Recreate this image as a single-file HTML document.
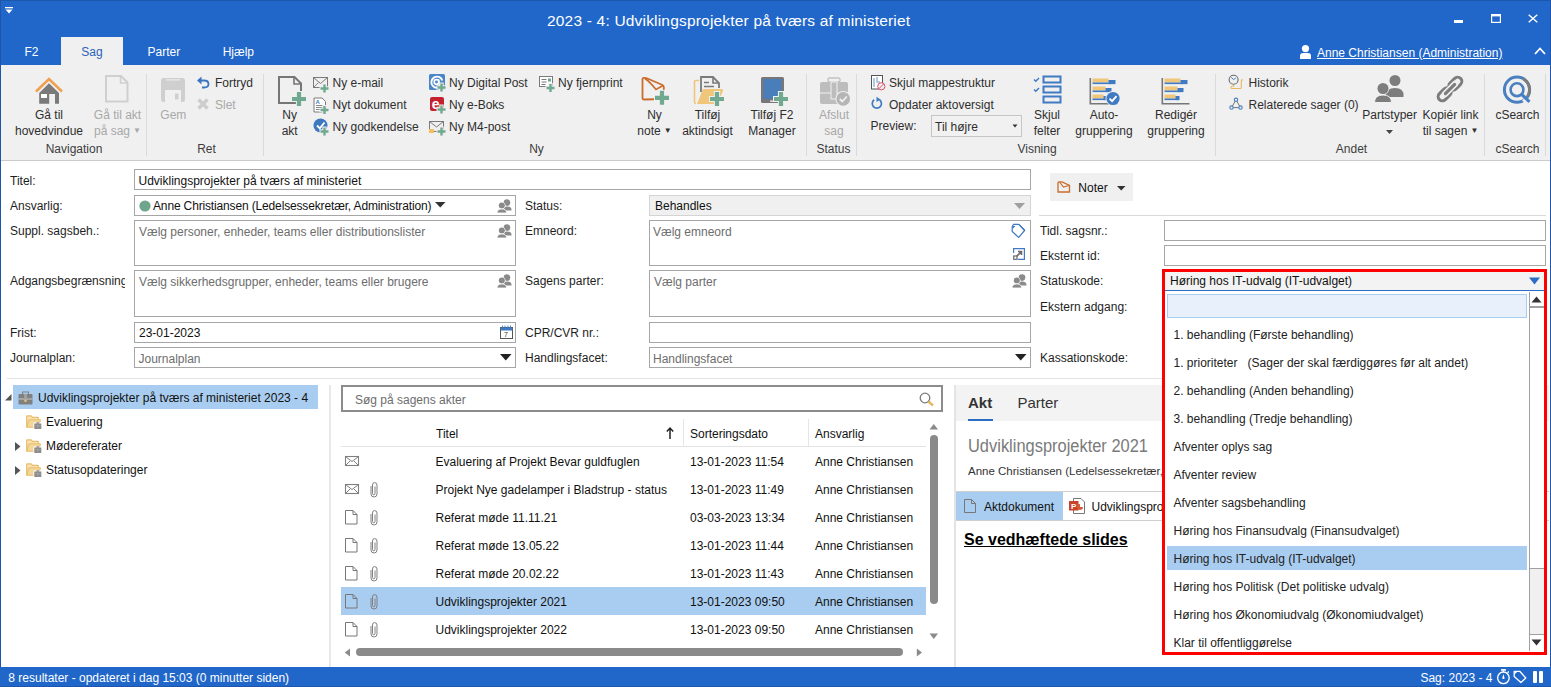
<!DOCTYPE html>
<html><head><meta charset="utf-8"><style>
html,body{margin:0;padding:0;width:1551px;height:687px;overflow:hidden;background:#fff}
body{position:relative;font-family:"Liberation Sans",sans-serif}
.t{position:absolute;white-space:nowrap;line-height:1;font-family:"Liberation Sans",sans-serif}
.r{position:absolute;box-sizing:border-box}
svg.r{overflow:visible}
</style></head><body>
<div class="r" style="left:0px;top:0px;width:1551px;height:37px;background:#2167c9"></div>
<div class="r" style="left:0px;top:0px;width:1551px;height:1px;background:#1b57ad"></div>
<div class="r" style="left:0px;top:37px;width:1551px;height:28px;background:#2167c9"></div>
<svg class="r" style="left:5px;top:7px" width="8" height="7" viewBox="0 0 8 7"><rect x="0" y="0" width="8" height="1.3" fill="#fff"/><path d="M0.5 2.5 L7.5 2.5 L4 6.5 Z" fill="#fff"/></svg>
<div class="t" style="left:547px;top:12.88px;font-size:15.5px;color:#fff;font-weight:400;letter-spacing:0.19px">2023 - 4: Udviklingsprojekter på tværs af ministeriet</div>
<div class="r" style="left:1454px;top:20px;width:9px;height:3px;background:#fff"></div>
<svg class="r" style="left:1491px;top:14px" width="10" height="9" viewBox="0 0 10 9"><rect x="0.6" y="0.6" width="8.8" height="7.8" fill="none" stroke="#fff" stroke-width="1.2"/><rect x="0" y="0" width="10" height="2.4" fill="#fff"/></svg>
<svg class="r" style="left:1528px;top:14px" width="10" height="9" viewBox="0 0 10 9"><path d="M0.7 0.7 L9.3 8.3 M9.3 0.7 L0.7 8.3" stroke="#fff" stroke-width="1.4"/></svg>
<div class="r" style="left:61px;top:37px;width:62px;height:28px;background:#f0f0f0"></div>
<div class="t" style="left:24.5px;top:45.84px;font-size:12px;color:#fff;font-weight:400;">F2</div>
<div class="t" style="left:-208px;width:600px;text-align:center;top:45.84px;font-size:12px;color:#2b63b8;font-weight:400;">Sag</div>
<div class="t" style="left:147.6px;top:45.84px;font-size:12px;color:#fff;font-weight:400;">Parter</div>
<div class="t" style="left:222.7px;top:45.84px;font-size:12px;color:#fff;font-weight:400;">Hjælp</div>
<svg class="r" style="left:1300px;top:45px" width="11" height="14" viewBox="0 0 11 14"><circle cx="5.5" cy="3.6" r="3.6" fill="#fff"/><path d="M0 14 L0 11 Q0 8 3 8 L8 8 Q11 8 11 11 L11 14 Z" fill="#fff"/></svg>
<div class="t" style="left:1317px;top:46.84px;font-size:12px;color:#fff;font-weight:400;text-decoration:underline">Anne Christiansen (Administration)</div>
<svg class="r" style="left:1534px;top:47px" width="12" height="8" viewBox="0 0 12 8"><path d="M1 7 L6 1.5 L11 7" fill="none" stroke="#fff" stroke-width="1.8"/></svg>
<div class="r" style="left:1px;top:65px;width:1549px;height:95px;background:#f0f0f0"></div>
<div class="r" style="left:1px;top:160px;width:1549px;height:1px;background:#cbcbcb"></div>
<div class="r" style="left:146px;top:74px;width:1px;height:82px;background:#dadada"></div>
<div class="r" style="left:263px;top:74px;width:1px;height:82px;background:#dadada"></div>
<div class="r" style="left:806px;top:74px;width:1px;height:82px;background:#dadada"></div>
<div class="r" style="left:856px;top:74px;width:1px;height:82px;background:#dadada"></div>
<div class="r" style="left:1215px;top:74px;width:1px;height:82px;background:#dadada"></div>
<div class="r" style="left:1484px;top:74px;width:1px;height:82px;background:#dadada"></div>
<div class="r" style="left:1545px;top:74px;width:1px;height:82px;background:#dadada"></div>
<svg class="r" style="left:0;top:0" width="1551" height="687"><path d="M39.2 93 L49 83.3 L59 93 L59 103.8 L55 103.8 L55 94 L49.2 94 L49.2 103.8 L39.2 103.8 Z" fill="#7a7a7a"/><rect x="41" y="94" width="6" height="4" fill="#fff"/><path d="M36 91.5 L49 79 L62 91.5" fill="none" stroke="#f0a04e" stroke-width="2.6" stroke-linejoin="miter"/><path d="M106 76 L121 76 L127.5 82.5 L127.5 101.5 L106 101.5 Z" fill="none" stroke="#cfcfcf" stroke-width="2"/><path d="M120.5 76 L120.5 83 L127.5 83" fill="none" stroke="#cfcfcf" stroke-width="1.5"/><rect x="161" y="78" width="24" height="24" rx="2.5" fill="#cfcfcf"/><rect x="166" y="79" width="14" height="1.6" fill="#e4e4e4"/><rect x="165" y="90" width="16" height="12" fill="#f0f0f0"/><rect x="175" y="93.5" width="3.5" height="6" fill="#cfcfcf"/><path d="M199.5 80.5 L204 80.5 Q208.5 80.5 208.5 84 Q208.5 87.5 204 87.5 L202 87.5" fill="none" stroke="#3a76c0" stroke-width="1.8"/><path d="M197 80.5 L201.5 76.5 L201.5 84.5 Z" fill="#3a76c0"/><path d="M198.5 99.5 L207.5 108.5 M207.5 99.5 L198.5 108.5" stroke="#cdcdcd" stroke-width="3.4"/><path d="M279 77 L294.5 77 L301 83.5 L301 103 L279 103 Z" fill="none" stroke="#767676" stroke-width="2"/><path d="M294 77 L294 84 L301 84" fill="none" stroke="#767676" stroke-width="1.6"/><path d="M295.9 91.0 h6.2 v4.9 h4.9 v6.2 h-4.9 v4.9 h-6.2 v-4.9 h-4.9 v-6.2 h4.9 Z" fill="#f0f0f0"/><path d="M296.9 92.0 h4.2 v4.9 h4.9 v4.2 h-4.9 v4.9 h-4.2 v-4.9 h-4.9 v-4.2 h4.9 Z" fill="#70a890"/><rect x="313.5" y="77.5" width="14" height="10" fill="none" stroke="#7a7a7a" stroke-width="1"/><path d="M313.5 87.5 L318.5 82.5" stroke="#7a7a7a" stroke-width="0.9"/><path d="M313.5 77.5 L320.5 83.5 L327.5 77.5" fill="none" stroke="#7a7a7a" stroke-width="1"/><path d="M322.3 83.5 h4.4 v2.8 h2.8 v4.4 h-2.8 v2.8 h-4.4 v-2.8 h-2.8 v-4.4 h2.8 Z" fill="#f0f0f0"/><path d="M323.3 84.5 h2.4 v2.8 h2.8 v2.4 h-2.8 v2.8 h-2.4 v-2.8 h-2.8 v-2.4 h2.8 Z" fill="#70a890"/><path d="M314 98 L322 98 L325.5 101.5 L325.5 112 L314 112 Z" fill="#fff" stroke="#7a7a7a" stroke-width="1"/><text x="315.5" y="103.5" font-family="Liberation Sans" font-size="6" font-weight="bold" fill="#4a7ebb">A</text><path d="M316 105.5 L323 105.5 M316 107.5 L323 107.5 M316 109.5 L321 109.5" stroke="#777" stroke-width="0.9"/><path d="M322.3 105.0 h4.4 v2.8 h2.8 v4.4 h-2.8 v2.8 h-4.4 v-2.8 h-2.8 v-4.4 h2.8 Z" fill="#f0f0f0"/><path d="M323.3 106.0 h2.4 v2.8 h2.8 v2.4 h-2.8 v2.8 h-2.4 v-2.8 h-2.8 v-2.4 h2.8 Z" fill="#70a890"/><circle cx="320.5" cy="125.5" r="7" fill="#3f78c0"/><path d="M317 125.5 L319.8 128.3 L324.5 122.5" fill="none" stroke="#fff" stroke-width="1.8"/><path d="M322.3 126.5 h4.4 v2.8 h2.8 v4.4 h-2.8 v2.8 h-4.4 v-2.8 h-2.8 v-4.4 h2.8 Z" fill="#f0f0f0"/><path d="M323.3 127.5 h2.4 v2.8 h2.8 v2.4 h-2.8 v2.8 h-2.4 v-2.8 h-2.8 v-2.4 h2.8 Z" fill="#70a890"/><rect x="429" y="74" width="16" height="16" rx="1.5" fill="#4a85c8"/><path d="M441.5 85.5 A5.6 5.6 0 1 1 442.3 80.5" fill="none" stroke="#fff" stroke-width="1.9"/><circle cx="436.5" cy="82" r="2.3" fill="none" stroke="#fff" stroke-width="1.7"/><path d="M438.8 79.5 L438.8 83.5 Q438.8 85 440.5 85" fill="none" stroke="#fff" stroke-width="1.5"/><path d="M439.3 82.5 h4.4 v2.8 h2.8 v4.4 h-2.8 v2.8 h-4.4 v-2.8 h-2.8 v-4.4 h2.8 Z" fill="#f0f0f0"/><path d="M440.3 83.5 h2.4 v2.8 h2.8 v2.4 h-2.8 v2.8 h-2.4 v-2.8 h-2.8 v-2.4 h2.8 Z" fill="#70a890"/><rect x="430" y="97" width="14" height="14" rx="2" fill="#c4212f"/><text x="431.8" y="109.3" font-family="Liberation Sans" font-weight="bold" font-size="14" fill="#fff">e</text><path d="M439.3 104.5 h4.4 v2.8 h2.8 v4.4 h-2.8 v2.8 h-4.4 v-2.8 h-2.8 v-4.4 h2.8 Z" fill="#f0f0f0"/><path d="M440.3 105.5 h2.4 v2.8 h2.8 v2.4 h-2.8 v2.8 h-2.4 v-2.8 h-2.8 v-2.4 h2.8 Z" fill="#70a890"/><rect x="429.5" y="121.5" width="14" height="10" fill="none" stroke="#7a7a7a" stroke-width="1"/><path d="M429.5 121.5 L436.5 127 L443.5 121.5" fill="none" stroke="#7a7a7a" stroke-width="1"/><rect x="429" y="129" width="5" height="4" fill="#f0c060"/><path d="M439.3 126.5 h4.4 v2.8 h2.8 v4.4 h-2.8 v2.8 h-4.4 v-2.8 h-2.8 v-4.4 h2.8 Z" fill="#f0f0f0"/><path d="M440.3 127.5 h2.4 v2.8 h2.8 v2.4 h-2.8 v2.8 h-2.4 v-2.8 h-2.8 v-2.4 h2.8 Z" fill="#70a890"/><rect x="539.5" y="76.5" width="13" height="10" fill="#fff" stroke="#7a7a7a" stroke-width="1"/><path d="M541.5 79.5 h5 M541.5 82 h5 M541.5 84.5 h4" stroke="#7a7a7a" stroke-width="1"/><rect x="548" y="78.5" width="3" height="3" fill="#6ea58c"/><path d="M548.3 83.0 h4.4 v2.8 h2.8 v4.4 h-2.8 v2.8 h-4.4 v-2.8 h-2.8 v-4.4 h2.8 Z" fill="#f0f0f0"/><path d="M549.3 84.0 h2.4 v2.8 h2.8 v2.4 h-2.8 v2.8 h-2.4 v-2.8 h-2.8 v-2.4 h2.8 Z" fill="#70a890"/><path d="M642.5 79 Q642.5 77.8 644 77.8 Q646 77.8 648 78.8 L662.5 85 Q663.8 85.6 663.8 87 L663.8 99 L643.8 99.5 Q642.5 99.5 642.5 98.3 Z" fill="none" stroke="#c96c2c" stroke-width="1.8"/><path d="M645 78.5 Q650 82 656 89.5 L663 85.5" fill="none" stroke="#c96c2c" stroke-width="1.6"/><path d="M658.9 89.8 h6.2 v4.9 h4.9 v6.2 h-4.9 v4.9 h-6.2 v-4.9 h-4.9 v-6.2 h4.9 Z" fill="#f0f0f0"/><path d="M659.9 90.8 h4.2 v4.9 h4.9 v4.2 h-4.9 v4.9 h-4.2 v-4.9 h-4.9 v-4.2 h4.9 Z" fill="#70a890"/><path d="M699 80.5 L695.5 80.5 Q694.5 80.5 694.5 81.5 L694.5 102 Q694.5 103.5 696 103.5" fill="none" stroke="#efc67a" stroke-width="1.6"/><path d="M701 92 L701 77 L713 77 L719 83 L719 88" fill="#f0f0f0" stroke="#7a7a7a" stroke-width="1.8"/><path d="M713 77 L713 83 L719 83" fill="none" stroke="#7a7a7a" stroke-width="1.6"/><path d="M704 82.5 h5 M704 86.5 h10" stroke="#7a7a7a" stroke-width="1.6"/><path d="M703 89 L722 89 Q723.5 89 723 90.5 L718 104 L697 104 Z" fill="#efc67a"/><path d="M713.9 91.0 h6.2 v4.9 h4.9 v6.2 h-4.9 v4.9 h-6.2 v-4.9 h-4.9 v-6.2 h4.9 Z" fill="#f0f0f0"/><path d="M714.9 92.0 h4.2 v4.9 h4.9 v4.2 h-4.9 v4.9 h-4.2 v-4.9 h-4.9 v-4.2 h4.9 Z" fill="#70a890"/><rect x="761" y="77" width="23" height="26" rx="1.5" fill="#777"/><rect x="763.5" y="79" width="18" height="20" fill="#4a7ebb"/><rect x="770" y="100.5" width="4" height="1.3" fill="#f0f0f0"/><path d="M777.9 91.0 h6.2 v4.9 h4.9 v6.2 h-4.9 v4.9 h-6.2 v-4.9 h-4.9 v-6.2 h4.9 Z" fill="#f0f0f0"/><path d="M778.9 92.0 h4.2 v4.9 h4.9 v4.2 h-4.9 v4.9 h-4.2 v-4.9 h-4.9 v-4.2 h4.9 Z" fill="#70a890"/><rect x="828" y="78" width="12" height="4" rx="1.5" fill="none" stroke="#c2c2c2" stroke-width="1.4"/><rect x="820" y="82" width="28" height="22" rx="2" fill="#bdbdbd"/><path d="M820 93 h28" stroke="#f0f0f0" stroke-width="1"/><rect x="831" y="82" width="6" height="17" fill="#bdbdbd" stroke="#f0f0f0" stroke-width="1"/><circle cx="843.2" cy="98.9" r="7.8" fill="#f0f0f0"/><circle cx="843.2" cy="98.9" r="6.8" fill="#b5b5b5"/><path d="M839.8 99 L842.3 101.5 L846.8 96.5" fill="none" stroke="#f0f0f0" stroke-width="1.8"/><rect x="871.5" y="75.5" width="11" height="13.5" fill="#fff" stroke="#555" stroke-width="1"/><path d="M874 78 v9 M877 77 v5 h3" stroke="#9ab8d8" stroke-width="1.5" fill="none"/><circle cx="881.3" cy="86.3" r="3.6" fill="#f0f0f0" stroke="#e0506a" stroke-width="1"/><path d="M879 88.6 L883.6 84" stroke="#e0506a" stroke-width="1"/><path d="M879.5 99.8 A4.6 4.6 0 1 1 874.2 99.8" fill="none" stroke="#3f7ac2" stroke-width="1.7"/><path d="M876.5 96.8 L880.5 99.5 L876.5 102 Z" fill="#3f7ac2"/><rect x="931.5" y="115.5" width="90" height="21" fill="#f1f1f1" stroke="#c6c6c6" stroke-width="1"/><path d="M1012.5 124.5 L1017.5 124.5 L1015 127.5 Z" fill="#333"/><path d="M1034 79.5 L1035.8 81.2 L1039 78 M1034 89.5 L1035.8 91.2 L1039 88" fill="none" stroke="#3f7ac2" stroke-width="1.5"/><rect x="1043.5" y="76.5" width="17" height="6" fill="none" stroke="#3f7ac2" stroke-width="2"/><rect x="1043.5" y="86.5" width="17" height="6" fill="none" stroke="#3f7ac2" stroke-width="2"/><rect x="1043.5" y="96.5" width="17" height="6" fill="none" stroke="#3f7ac2" stroke-width="2"/><path d="M1090.3 78 L1090.3 103.7 L1117.5 103.7" fill="none" stroke="#777" stroke-width="1.6"/><rect x="1092.5" y="78.5" width="16" height="4" fill="#efc67a"/><rect x="1092.5" y="82.5" width="19" height="1.6" fill="#3f7ac2"/><rect x="1108.5" y="80" width="7" height="4.1" fill="#3f7ac2"/><rect x="1092.5" y="86.5" width="13" height="4" fill="#efc67a"/><rect x="1092.5" y="90.5" width="17" height="1.6" fill="#3f7ac2"/><rect x="1105.5" y="88" width="6" height="4.1" fill="#3f7ac2"/><rect x="1092.5" y="94.5" width="11" height="4" fill="#efc67a"/><rect x="1092.5" y="98.5" width="14" height="1.6" fill="#3f7ac2"/><rect x="1103.5" y="96" width="4" height="4.1" fill="#3f7ac2"/><circle cx="1113.0" cy="98.5" r="7.5" fill="#f0f0f0"/><circle cx="1113.0" cy="98.5" r="6.6" fill="#3f7ac2"/><path d="M1109.5 98.6 L1112.1 101.2 L1116.5 96.2" fill="none" stroke="#fff" stroke-width="1.8"/><path d="M1162.3 78 L1162.3 103.7 L1189.5 103.7" fill="none" stroke="#777" stroke-width="1.6"/><rect x="1164.5" y="78.5" width="16" height="4" fill="#efc67a"/><rect x="1164.5" y="82.5" width="19" height="1.6" fill="#3f7ac2"/><rect x="1180.5" y="80" width="7" height="4.1" fill="#3f7ac2"/><rect x="1164.5" y="86.5" width="13" height="4" fill="#efc67a"/><rect x="1164.5" y="90.5" width="17" height="1.6" fill="#3f7ac2"/><rect x="1177.5" y="88" width="6" height="4.1" fill="#3f7ac2"/><rect x="1164.5" y="94.5" width="11" height="4" fill="#efc67a"/><rect x="1164.5" y="98.5" width="14" height="1.6" fill="#3f7ac2"/><rect x="1175.5" y="96" width="4" height="4.1" fill="#3f7ac2"/><circle cx="1233.6" cy="79.8" r="4.5" fill="none" stroke="#6a6a6a" stroke-width="1.1"/><path d="M1231.2 77.5 L1233.6 79.5 L1235.8 78" fill="none" stroke="#3f7ac2" stroke-width="1"/><path d="M1233.6 85 L1233.6 86.3 L1232 86.3 Q1231 86.3 1231 87.4 Q1231 88.5 1232 88.5 L1240.3 88.5 Q1241.3 88.5 1241.3 87.4 L1241.3 80.5 Q1241.3 79.8 1242 79.8 Q1242.8 79.8 1242.8 80.6" fill="none" stroke="#e9b95e" stroke-width="1.1"/><path d="M1236 99.8 L1231.5 107.6 L1240.5 107.6 Z" fill="none" stroke="#666" stroke-width="0.9"/><circle cx="1236" cy="99.8" r="1.7" fill="#f0f0f0" stroke="#4a80c0" stroke-width="1.1"/><circle cx="1231.5" cy="107.6" r="1.7" fill="#f0f0f0" stroke="#4a80c0" stroke-width="1.1"/><circle cx="1240.5" cy="107.6" r="1.7" fill="#f0f0f0" stroke="#4a80c0" stroke-width="1.1"/><circle cx="1395" cy="80.5" r="5.5" fill="#7d7d7d"/><path d="M1385 97 Q1386 88 1395 88 Q1404 88 1403.5 96 L1403.5 97 Z" fill="#7d7d7d"/><circle cx="1383" cy="88.5" r="6.2" fill="#f0f0f0"/><circle cx="1383" cy="88.5" r="5.5" fill="#7d7d7d"/><path d="M1374.5 102.5 Q1374.5 95 1383 95 Q1391.5 95 1391.5 102.5 Z" fill="#7d7d7d" stroke="#f0f0f0" stroke-width="1"/><g transform="rotate(-45 1450 89)"><rect x="1435" y="84.8" width="15" height="8.4" rx="4.2" fill="none" stroke="#7d7d7d" stroke-width="3"/><rect x="1450" y="84.8" width="15" height="8.4" rx="4.2" fill="none" stroke="#7d7d7d" stroke-width="3"/><path d="M1443 89 h14" stroke="#f0f0f0" stroke-width="6.5" stroke-linecap="round"/><path d="M1443.5 89 h13" stroke="#7d7d7d" stroke-width="3.2" stroke-linecap="round"/></g><circle cx="1517" cy="89.7" r="12.6" fill="none" stroke="#4a80c0" stroke-width="3"/><path d="M1523.3 78.8 A12.6 12.6 0 0 1 1527.9 96" fill="none" stroke="#7d7d7d" stroke-width="3"/><circle cx="1517" cy="89.7" r="6.4" fill="none" stroke="#4a80c0" stroke-width="2.6"/><path d="M1524 98.5 L1527 101.5" stroke="#f0f0f0" stroke-width="5.5"/><path d="M1521.6 94.3 L1529.5 101.8" stroke="#4a80c0" stroke-width="3.2"/></svg>
<div class="t" style="left:-251px;width:600px;text-align:center;top:108.84px;font-size:12px;color:#2e2e2e;font-weight:400;">Gå til</div>
<div class="t" style="left:-251px;width:600px;text-align:center;top:124.84px;font-size:12px;color:#2e2e2e;font-weight:400;">hovedvindue</div>
<div class="t" style="left:-182.5px;width:600px;text-align:center;top:108.84px;font-size:12px;color:#a8a8a8;font-weight:400;">Gå til akt</div>
<div class="t" style="left:-182.5px;width:600px;text-align:center;top:124.84px;font-size:12px;color:#a8a8a8;font-weight:400;">på sag<span style="font-size:8px;position:relative;top:-2px;margin-left:3px">&#9660;</span></div>
<div class="t" style="left:-126.69999999999999px;width:600px;text-align:center;top:108.84px;font-size:12px;color:#a8a8a8;font-weight:400;">Gem</div>
<div class="t" style="left:215px;top:76.84px;font-size:12px;color:#2e2e2e;font-weight:400;">Fortryd</div>
<div class="t" style="left:215px;top:98.84px;font-size:12px;color:#a8a8a8;font-weight:400;">Slet</div>
<div class="t" style="left:-10.300000000000011px;width:600px;text-align:center;top:108.84px;font-size:12px;color:#2e2e2e;font-weight:400;">Ny</div>
<div class="t" style="left:-10.300000000000011px;width:600px;text-align:center;top:124.84px;font-size:12px;color:#2e2e2e;font-weight:400;">akt</div>
<div class="t" style="left:332.5px;top:76.84px;font-size:12px;color:#2e2e2e;font-weight:400;">Ny e-mail</div>
<div class="t" style="left:332.5px;top:98.84px;font-size:12px;color:#2e2e2e;font-weight:400;">Nyt dokument</div>
<div class="t" style="left:332.5px;top:120.84px;font-size:12px;color:#2e2e2e;font-weight:400;">Ny godkendelse</div>
<div class="t" style="left:449px;top:76.84px;font-size:12px;color:#2e2e2e;font-weight:400;">Ny Digital Post</div>
<div class="t" style="left:449px;top:98.84px;font-size:12px;color:#2e2e2e;font-weight:400;">Ny e-Boks</div>
<div class="t" style="left:449px;top:120.84px;font-size:12px;color:#2e2e2e;font-weight:400;">Ny M4-post</div>
<div class="t" style="left:558px;top:76.84px;font-size:12px;color:#2e2e2e;font-weight:400;">Ny fjernprint</div>
<div class="t" style="left:354.5px;width:600px;text-align:center;top:108.84px;font-size:12px;color:#2e2e2e;font-weight:400;">Ny</div>
<div class="t" style="left:354.5px;width:600px;text-align:center;top:124.84px;font-size:12px;color:#2e2e2e;font-weight:400;">note<span style="font-size:8px;position:relative;top:-2px;margin-left:3px">&#9660;</span></div>
<div class="t" style="left:407.5px;width:600px;text-align:center;top:108.84px;font-size:12px;color:#2e2e2e;font-weight:400;">Tilføj</div>
<div class="t" style="left:407.5px;width:600px;text-align:center;top:124.84px;font-size:12px;color:#2e2e2e;font-weight:400;">aktindsigt</div>
<div class="t" style="left:472px;width:600px;text-align:center;top:108.84px;font-size:12px;color:#2e2e2e;font-weight:400;">Tilføj F2</div>
<div class="t" style="left:472px;width:600px;text-align:center;top:124.84px;font-size:12px;color:#2e2e2e;font-weight:400;">Manager</div>
<div class="t" style="left:534px;width:600px;text-align:center;top:108.84px;font-size:12px;color:#a8a8a8;font-weight:400;">Afslut</div>
<div class="t" style="left:534px;width:600px;text-align:center;top:124.84px;font-size:12px;color:#a8a8a8;font-weight:400;">sag</div>
<div class="t" style="left:889px;top:76.84px;font-size:12px;color:#2e2e2e;font-weight:400;">Skjul mappestruktur</div>
<div class="t" style="left:889px;top:98.84px;font-size:12px;color:#2e2e2e;font-weight:400;">Opdater aktoversigt</div>
<div class="t" style="left:870.5px;top:119.84px;font-size:12px;color:#2e2e2e;font-weight:400;">Preview:</div>
<div class="t" style="left:935px;top:121.34px;font-size:12px;color:#2e2e2e;font-weight:400;">Til højre</div>
<div class="t" style="left:747px;width:600px;text-align:center;top:108.84px;font-size:12px;color:#2e2e2e;font-weight:400;">Skjul</div>
<div class="t" style="left:747px;width:600px;text-align:center;top:124.84px;font-size:12px;color:#2e2e2e;font-weight:400;">felter</div>
<div class="t" style="left:804px;width:600px;text-align:center;top:108.84px;font-size:12px;color:#2e2e2e;font-weight:400;">Auto-</div>
<div class="t" style="left:804px;width:600px;text-align:center;top:124.84px;font-size:12px;color:#2e2e2e;font-weight:400;">gruppering</div>
<div class="t" style="left:876px;width:600px;text-align:center;top:108.84px;font-size:12px;color:#2e2e2e;font-weight:400;">Redigér</div>
<div class="t" style="left:876px;width:600px;text-align:center;top:124.84px;font-size:12px;color:#2e2e2e;font-weight:400;">gruppering</div>
<div class="t" style="left:1248.5px;top:76.84px;font-size:12px;color:#2e2e2e;font-weight:400;">Historik</div>
<div class="t" style="left:1248.5px;top:98.84px;font-size:12px;color:#2e2e2e;font-weight:400;">Relaterede sager (0)</div>
<div class="t" style="left:1089.7px;width:600px;text-align:center;top:108.84px;font-size:12px;color:#2e2e2e;font-weight:400;">Partstyper</div>
<svg class="r" style="left:1386px;top:130px" width="8" height="5"><path d="M0 0 L7 0 L3.5 4 Z" fill="#444"/></svg>
<div class="t" style="left:1150.5px;width:600px;text-align:center;top:108.84px;font-size:12px;color:#2e2e2e;font-weight:400;">Kopiér link</div>
<div class="t" style="left:1150.5px;width:600px;text-align:center;top:124.84px;font-size:12px;color:#2e2e2e;font-weight:400;">til sagen<span style="font-size:8px;position:relative;top:-2px;margin-left:3px">&#9660;</span></div>
<div class="t" style="left:1217.4px;width:600px;text-align:center;top:108.84px;font-size:12px;color:#2e2e2e;font-weight:400;">cSearch</div>
<div class="t" style="left:-226px;width:600px;text-align:center;top:142.74px;font-size:12px;color:#3c3c3c;font-weight:400;">Navigation</div>
<div class="t" style="left:-93.5px;width:600px;text-align:center;top:142.74px;font-size:12px;color:#3c3c3c;font-weight:400;">Ret</div>
<div class="t" style="left:236.5px;width:600px;text-align:center;top:142.74px;font-size:12px;color:#3c3c3c;font-weight:400;">Ny</div>
<div class="t" style="left:533.5px;width:600px;text-align:center;top:142.74px;font-size:12px;color:#3c3c3c;font-weight:400;">Status</div>
<div class="t" style="left:737px;width:600px;text-align:center;top:142.74px;font-size:12px;color:#3c3c3c;font-weight:400;">Visning</div>
<div class="t" style="left:1051.5px;width:600px;text-align:center;top:142.74px;font-size:12px;color:#3c3c3c;font-weight:400;">Andet</div>
<div class="t" style="left:1217.4px;width:600px;text-align:center;top:142.74px;font-size:12px;color:#3c3c3c;font-weight:400;">cSearch</div>
<div class="t" style="left:10px;top:174.84px;font-size:12px;color:#1e1e1e;font-weight:400;">Titel:</div>
<div class="t" style="left:10px;top:199.84px;font-size:12px;color:#1e1e1e;font-weight:400;">Ansvarlig:</div>
<div class="t" style="left:10px;top:224.84px;font-size:12px;color:#1e1e1e;font-weight:400;">Suppl. sagsbeh.:</div>
<div class="t" style="left:10px;top:274.8px;width:115px;height:16px;overflow:hidden;font-size:12px;color:#1e1e1e">Adgangsbegrænsning</div>
<div class="t" style="left:10px;top:326.84px;font-size:12px;color:#1e1e1e;font-weight:400;">Frist:</div>
<div class="t" style="left:10px;top:351.84px;font-size:12px;color:#1e1e1e;font-weight:400;">Journalplan:</div>
<div class="t" style="left:525px;top:199.84px;font-size:12px;color:#1e1e1e;font-weight:400;">Status:</div>
<div class="t" style="left:525px;top:224.84px;font-size:12px;color:#1e1e1e;font-weight:400;">Emneord:</div>
<div class="t" style="left:525px;top:274.84px;font-size:12px;color:#1e1e1e;font-weight:400;">Sagens parter:</div>
<div class="t" style="left:525px;top:326.84px;font-size:12px;color:#1e1e1e;font-weight:400;">CPR/CVR nr.:</div>
<div class="t" style="left:525px;top:351.84px;font-size:12px;color:#1e1e1e;font-weight:400;">Handlingsfacet:</div>
<div class="t" style="left:1040px;top:224.84px;font-size:12px;color:#1e1e1e;font-weight:400;">Tidl. sagsnr.:</div>
<div class="t" style="left:1040px;top:249.84px;font-size:12px;color:#1e1e1e;font-weight:400;">Eksternt id:</div>
<div class="t" style="left:1040px;top:274.84px;font-size:12px;color:#1e1e1e;font-weight:400;">Statuskode:</div>
<div class="t" style="left:1040px;top:300.84px;font-size:12px;color:#1e1e1e;font-weight:400;">Ekstern adgang:</div>
<div class="t" style="left:1040px;top:351.84px;font-size:12px;color:#1e1e1e;font-weight:400;">Kassationskode:</div>
<div class="r" style="left:134px;top:169px;width:897px;height:21px;border:1px solid #a6a6a6;background:#fff"></div>
<div class="t" style="left:138.5px;top:174.84px;font-size:12px;color:#111;font-weight:400;">Udviklingsprojekter på tværs af ministeriet</div>
<div class="r" style="left:134px;top:195px;width:382px;height:21px;border:1px solid #a6a6a6;background:#fff"></div>
<svg class="r" style="left:139px;top:200px" width="12" height="12" viewBox="0 0 12 12"><circle cx="6" cy="6" r="5.6" fill="#6fa58c"/></svg>
<div class="t" style="left:153px;top:199.84px;font-size:12px;color:#111;font-weight:400;letter-spacing:-0.15px">Anne Christiansen (Ledelsessekretær, Administration)</div>
<svg class="r" style="left:435px;top:202px" width="11" height="6" viewBox="0 0 11 6"><path d="M0 0 L10.5 0 L5.25 5.5 Z" fill="#333"/></svg>
<svg class="r" style="left:497px;top:199px" width="15" height="14" viewBox="0 0 15 14"><circle cx="10" cy="3.6" r="3.3" fill="#8a8a8a"/><path d="M5.5 11.5 Q5.5 7.5 10 7.5 Q14.5 7.5 14.5 11 L14.5 11.5 Z" fill="#8a8a8a"/><circle cx="4.8" cy="6.6" r="3.6" fill="#fff"/><circle cx="4.8" cy="6.6" r="3" fill="#8a8a8a"/><path d="M0 14 Q0 10 4.8 10 Q9.6 10 9.6 14 Z" fill="#8a8a8a" stroke="#fff" stroke-width="0.8"/></svg>
<div class="r" style="left:649px;top:195px;width:382px;height:21px;border:1px solid #d4d4d4;background:#f0f0f0"></div>
<div class="t" style="left:655px;top:199.84px;font-size:12px;color:#111;font-weight:400;">Behandles</div>
<svg class="r" style="left:1014px;top:203px" width="12" height="7" viewBox="0 0 12 7"><path d="M0 0 L11 0 L5.5 6 Z" fill="#a0a0a0"/></svg>
<div class="r" style="left:134px;top:220px;width:382px;height:46px;border:1px solid #a6a6a6;background:#fff"></div>
<div class="t" style="left:139px;top:225.84px;font-size:12px;color:#6d6d6d;font-weight:400;">Vælg personer, enheder, teams eller distributionslister</div>
<svg class="r" style="left:497px;top:224px" width="15" height="14" viewBox="0 0 15 14"><circle cx="10" cy="3.6" r="3.3" fill="#8a8a8a"/><path d="M5.5 11.5 Q5.5 7.5 10 7.5 Q14.5 7.5 14.5 11 L14.5 11.5 Z" fill="#8a8a8a"/><circle cx="4.8" cy="6.6" r="3.6" fill="#fff"/><circle cx="4.8" cy="6.6" r="3" fill="#8a8a8a"/><path d="M0 14 Q0 10 4.8 10 Q9.6 10 9.6 14 Z" fill="#8a8a8a" stroke="#fff" stroke-width="0.8"/></svg>
<div class="r" style="left:649px;top:220px;width:382px;height:46px;border:1px solid #a6a6a6;background:#fff"></div>
<div class="t" style="left:653px;top:225.84px;font-size:12px;color:#6d6d6d;font-weight:400;">Vælg emneord</div>
<svg class="r" style="left:1011px;top:223px" width="16" height="16" viewBox="0 0 16 16"><path d="M2.5 1.3 L7.7 1.3 L13.6 7.5 L7.7 14.5 L1.2 8.5 L1.2 4 Z" fill="none" stroke="#3f7ac2" stroke-width="1.2"/><path d="M8.3 1.3 L14 7" fill="none" stroke="#3f7ac2" stroke-width="1"/><path d="M1.5 3 L4.5 3 L1.5 6 Z" fill="#3f7ac2"/></svg>
<svg class="r" style="left:1013px;top:248px" width="12" height="12" viewBox="0 0 12 12"><path d="M0.6 5 L0.6 0.6 L11.4 0.6 L11.4 11.4 L5 11.4" fill="none" stroke="#3f7ac2" stroke-width="1.2"/><path d="M3.5 8.5 L8.2 3.8 M5 3.5 L8.5 3.5 L8.5 7" fill="none" stroke="#6a6a6a" stroke-width="1.6"/><rect x="0.7" y="8" width="3.3" height="3.3" fill="#fff" stroke="#6a6a6a" stroke-width="1.2"/></svg>
<div class="r" style="left:134px;top:270px;width:382px;height:47px;border:1px solid #a6a6a6;background:#fff"></div>
<div class="t" style="left:139px;top:275.84px;font-size:12px;color:#6d6d6d;font-weight:400;">Vælg sikkerhedsgrupper, enheder, teams eller brugere</div>
<svg class="r" style="left:497px;top:274px" width="15" height="14" viewBox="0 0 15 14"><circle cx="10" cy="3.6" r="3.3" fill="#8a8a8a"/><path d="M5.5 11.5 Q5.5 7.5 10 7.5 Q14.5 7.5 14.5 11 L14.5 11.5 Z" fill="#8a8a8a"/><circle cx="4.8" cy="6.6" r="3.6" fill="#fff"/><circle cx="4.8" cy="6.6" r="3" fill="#8a8a8a"/><path d="M0 14 Q0 10 4.8 10 Q9.6 10 9.6 14 Z" fill="#8a8a8a" stroke="#fff" stroke-width="0.8"/></svg>
<div class="r" style="left:649px;top:270px;width:382px;height:47px;border:1px solid #a6a6a6;background:#fff"></div>
<div class="t" style="left:654px;top:275.84px;font-size:12px;color:#6d6d6d;font-weight:400;">Vælg parter</div>
<svg class="r" style="left:1012px;top:274px" width="15" height="14" viewBox="0 0 15 14"><circle cx="10" cy="3.6" r="3.3" fill="#8a8a8a"/><path d="M5.5 11.5 Q5.5 7.5 10 7.5 Q14.5 7.5 14.5 11 L14.5 11.5 Z" fill="#8a8a8a"/><circle cx="4.8" cy="6.6" r="3.6" fill="#fff"/><circle cx="4.8" cy="6.6" r="3" fill="#8a8a8a"/><path d="M0 14 Q0 10 4.8 10 Q9.6 10 9.6 14 Z" fill="#8a8a8a" stroke="#fff" stroke-width="0.8"/></svg>
<div class="r" style="left:134px;top:322px;width:382px;height:21px;border:1px solid #a6a6a6;background:#fff"></div>
<div class="t" style="left:139px;top:327.34px;font-size:12px;color:#111;font-weight:400;">23-01-2023</div>
<svg class="r" style="left:500px;top:325px" width="13" height="14" viewBox="0 0 13 14"><rect x="0.5" y="2.5" width="12" height="11" fill="#fff" stroke="#555" stroke-width="1"/><rect x="0.5" y="2.5" width="12" height="3" fill="#3f7ac2"/><path d="M2.5 0.5 v3 M5 0.5 v3 M8 0.5 v3 M10.5 0.5 v3" stroke="#3f7ac2" stroke-width="0.9"/><text x="4" y="12.3" font-size="7" font-family="Liberation Sans" fill="#333">7</text></svg>
<div class="r" style="left:649px;top:322px;width:382px;height:21px;border:1px solid #a6a6a6;background:#fff"></div>
<div class="r" style="left:134px;top:347px;width:382px;height:21px;border:1px solid #a6a6a6;background:#fff"></div>
<div class="t" style="left:138.5px;top:352.84px;font-size:12px;color:#6d6d6d;font-weight:400;">Journalplan</div>
<svg class="r" style="left:500px;top:354px" width="12" height="7" viewBox="0 0 12 7"><path d="M0 0 L11.5 0 L5.75 6.5 Z" fill="#222"/></svg>
<div class="r" style="left:649px;top:347px;width:382px;height:21px;border:1px solid #a6a6a6;background:#fff"></div>
<div class="t" style="left:653px;top:352.84px;font-size:12px;color:#6d6d6d;font-weight:400;">Handlingsfacet</div>
<svg class="r" style="left:1015px;top:354px" width="12" height="7" viewBox="0 0 12 7"><path d="M0 0 L11.5 0 L5.75 6.5 Z" fill="#222"/></svg>
<div class="r" style="left:1050px;top:173px;width:83px;height:28px;background:#f0f0f0"></div>
<svg class="r" style="left:1057px;top:181px" width="14" height="12" viewBox="0 0 14 12"><path d="M1 1.8 Q1 0.8 2 0.8 L5 0.8 L12.5 4.5 L12.5 11 L1 11 Z" fill="none" stroke="#c96c2c" stroke-width="1.3"/><path d="M2.5 1 L6.5 6 L12 4.5" fill="none" stroke="#c96c2c" stroke-width="1.2"/></svg>
<div class="t" style="left:1078.3px;top:181.84px;font-size:12px;color:#111;font-weight:400;">Noter</div>
<svg class="r" style="left:1117px;top:186px" width="9" height="5" viewBox="0 0 9 5"><path d="M0 0 L8.5 0 L4.25 4.5 Z" fill="#333"/></svg>
<div class="r" style="left:1039px;top:215px;width:507px;height:1px;background:#d9d9d9"></div>
<div class="r" style="left:1164px;top:220px;width:382px;height:21px;border:1px solid #a6a6a6;background:#fff"></div>
<div class="r" style="left:1164px;top:245px;width:382px;height:21px;border:1px solid #a6a6a6;background:#fff"></div>
<div class="r" style="left:7px;top:378px;width:1539px;height:1px;background:#e3e3e3"></div>
<div class="r" style="left:13px;top:385px;width:305px;height:24px;background:#a9cdf0"></div>
<svg class="r" style="left:5px;top:394px" width="7" height="7" viewBox="0 0 7 7"><path d="M6.5 0 L6.5 6.5 L0 6.5 Z" fill="#555"/></svg>
<svg class="r" style="left:18px;top:392px" width="15" height="13" viewBox="0 0 15 13"><rect x="0.5" y="2" width="14" height="10.5" rx="1" fill="#808080"/><rect x="4.5" y="0" width="6" height="2.5" fill="none" stroke="#808080" stroke-width="1"/><path d="M0.5 7 h14" stroke="#c8c8c8" stroke-width="1"/><rect x="6" y="2" width="3" height="8" fill="#a0a0a0"/><rect x="6.5" y="7.5" width="2" height="2" fill="#f0c060"/></svg>
<div class="t" style="left:38px;top:391.84px;font-size:12px;color:#111;font-weight:400;">Udviklingsprojekter på tværs af ministeriet 2023 - 4</div>
<svg class="r" style="left:26px;top:415px" width="16" height="14" viewBox="0 0 16 14"><path d="M0.7 12.3 L0.7 1.5 Q0.7 0.8 1.4 0.8 L5 0.8 L6.5 2.3 L11.5 2.3 Q12.3 2.3 12.3 3 L12.3 4.2" fill="#f7e3b5" stroke="#e9bd6a" stroke-width="1.2"/><path d="M0.7 12.3 L2.8 4.8 L14.5 4.8 L12.5 12.3 Z" fill="#f3d69a" stroke="#e9bd6a" stroke-width="1"/><rect x="7.5" y="7.5" width="8.5" height="6.5" fill="#fff"/><rect x="8.3" y="8.5" width="7" height="5.5" fill="#8a8a8a"/><rect x="10.5" y="7.3" width="2.6" height="1.5" fill="#8a8a8a"/><path d="M8.3 10.8 h7 M11.8 8.5 v5.5" stroke="#b0b0b0" stroke-width="0.6"/></svg>
<div class="t" style="left:46px;top:415.84px;font-size:12px;color:#111;font-weight:400;">Evaluering</div>
<svg class="r" style="left:15px;top:442px" width="6" height="9" viewBox="0 0 6 9"><path d="M0 0 L5.5 4.5 L0 9 Z" fill="#555"/></svg>
<svg class="r" style="left:26px;top:439px" width="16" height="14" viewBox="0 0 16 14"><path d="M0.7 12.3 L0.7 1.5 Q0.7 0.8 1.4 0.8 L5 0.8 L6.5 2.3 L11.5 2.3 Q12.3 2.3 12.3 3 L12.3 4.2" fill="#f7e3b5" stroke="#e9bd6a" stroke-width="1.2"/><path d="M0.7 12.3 L2.8 4.8 L14.5 4.8 L12.5 12.3 Z" fill="#f3d69a" stroke="#e9bd6a" stroke-width="1"/><rect x="7.5" y="7.5" width="8.5" height="6.5" fill="#fff"/><rect x="8.3" y="8.5" width="7" height="5.5" fill="#8a8a8a"/><rect x="10.5" y="7.3" width="2.6" height="1.5" fill="#8a8a8a"/><path d="M8.3 10.8 h7 M11.8 8.5 v5.5" stroke="#b0b0b0" stroke-width="0.6"/></svg>
<div class="t" style="left:46px;top:439.84px;font-size:12px;color:#111;font-weight:400;">Mødereferater</div>
<svg class="r" style="left:15px;top:466px" width="6" height="9" viewBox="0 0 6 9"><path d="M0 0 L5.5 4.5 L0 9 Z" fill="#555"/></svg>
<svg class="r" style="left:26px;top:463px" width="16" height="14" viewBox="0 0 16 14"><path d="M0.7 12.3 L0.7 1.5 Q0.7 0.8 1.4 0.8 L5 0.8 L6.5 2.3 L11.5 2.3 Q12.3 2.3 12.3 3 L12.3 4.2" fill="#f7e3b5" stroke="#e9bd6a" stroke-width="1.2"/><path d="M0.7 12.3 L2.8 4.8 L14.5 4.8 L12.5 12.3 Z" fill="#f3d69a" stroke="#e9bd6a" stroke-width="1"/><rect x="7.5" y="7.5" width="8.5" height="6.5" fill="#fff"/><rect x="8.3" y="8.5" width="7" height="5.5" fill="#8a8a8a"/><rect x="10.5" y="7.3" width="2.6" height="1.5" fill="#8a8a8a"/><path d="M8.3 10.8 h7 M11.8 8.5 v5.5" stroke="#b0b0b0" stroke-width="0.6"/></svg>
<div class="t" style="left:46px;top:463.84px;font-size:12px;color:#111;font-weight:400;">Statusopdateringer</div>
<div class="r" style="left:329px;top:385px;width:2px;height:282px;background:#e8e8e8"></div>
<div class="r" style="left:341px;top:385px;width:602px;height:27px;border:2px solid #8c8c8c;background:#fff"></div>
<div class="t" style="left:355px;top:393.84px;font-size:12px;color:#6d6d6d;font-weight:400;">Søg på sagens akter</div>
<svg class="r" style="left:919px;top:392px" width="16" height="15" viewBox="0 0 16 15"><circle cx="6" cy="6" r="4.8" fill="none" stroke="#7a7a7a" stroke-width="1.3"/><path d="M9.5 9.5 L14 13.5" stroke="#e8b860" stroke-width="2.4"/></svg>
<div class="t" style="left:436px;top:428.34px;font-size:12px;color:#111;font-weight:400;">Titel</div>
<svg class="r" style="left:666px;top:427px" width="8" height="12" viewBox="0 0 8 12"><path d="M4 1 L4 12 M0.8 4.5 L4 1 L7.2 4.5" fill="none" stroke="#222" stroke-width="1.5"/></svg>
<div class="r" style="left:683px;top:419px;width:1px;height:28px;background:#e6e6e6"></div>
<div class="t" style="left:690px;top:428.34px;font-size:12px;color:#111;font-weight:400;">Sorteringsdato</div>
<div class="r" style="left:808px;top:419px;width:1px;height:28px;background:#e6e6e6"></div>
<div class="t" style="left:815px;top:428.34px;font-size:12px;color:#111;font-weight:400;">Ansvarlig</div>
<div class="r" style="left:341px;top:446px;width:585px;height:1px;background:#e3e3e3"></div>
<svg class="r" style="left:345px;top:456px" width="15" height="11" viewBox="0 0 15 11"><rect x="0.5" y="0.5" width="13" height="9" fill="none" stroke="#808080" stroke-width="1.1"/><path d="M0.5 0.5 L7 5.5 L13.5 0.5 M0.5 9.5 L5 5 M13.5 9.5 L9 5" fill="none" stroke="#808080" stroke-width="1"/></svg>
<div class="t" style="left:435.5px;top:455.84px;font-size:12px;color:#111;font-weight:400;">Evaluering af Projekt Bevar guldfuglen</div>
<div class="t" style="left:690px;top:455.84px;font-size:12px;color:#111;font-weight:400;">13-01-2023 11:54</div>
<div class="t" style="left:815px;top:455.84px;font-size:12px;color:#111;font-weight:400;">Anne Christiansen</div>
<svg class="r" style="left:345px;top:484px" width="15" height="11" viewBox="0 0 15 11"><rect x="0.5" y="0.5" width="13" height="9" fill="none" stroke="#808080" stroke-width="1.1"/><path d="M0.5 0.5 L7 5.5 L13.5 0.5 M0.5 9.5 L5 5 M13.5 9.5 L9 5" fill="none" stroke="#808080" stroke-width="1"/></svg>
<svg class="r" style="left:370px;top:482px" width="9" height="16" viewBox="0 0 9 16"><path d="M1 4 L1 12 Q1 15 4 15 Q7 15 7 12 L7 3 Q7 0.6 4.5 0.6 Q2.5 0.6 2.5 3 L2.5 11.5 Q2.5 12.8 3.8 12.8 Q5 12.8 5 11.5 L5 4.5" fill="none" stroke="#808080" stroke-width="1"/></svg>
<div class="t" style="left:435.5px;top:483.84px;font-size:12px;color:#111;font-weight:400;">Projekt Nye gadelamper i Bladstrup - status</div>
<div class="t" style="left:690px;top:483.84px;font-size:12px;color:#111;font-weight:400;">13-01-2023 11:49</div>
<div class="t" style="left:815px;top:483.84px;font-size:12px;color:#111;font-weight:400;">Anne Christiansen</div>
<svg class="r" style="left:345px;top:510px" width="13" height="15" viewBox="0 0 13 15"><path d="M0.5 0.5 L8 0.5 L12 4.5 L12 14 L0.5 14 Z" fill="none" stroke="#777" stroke-width="1"/><path d="M8 0.5 L8 4.5 L12 4.5" fill="none" stroke="#777" stroke-width="1"/></svg>
<svg class="r" style="left:370px;top:510px" width="9" height="16" viewBox="0 0 9 16"><path d="M1 4 L1 12 Q1 15 4 15 Q7 15 7 12 L7 3 Q7 0.6 4.5 0.6 Q2.5 0.6 2.5 3 L2.5 11.5 Q2.5 12.8 3.8 12.8 Q5 12.8 5 11.5 L5 4.5" fill="none" stroke="#808080" stroke-width="1"/></svg>
<div class="t" style="left:435.5px;top:511.84px;font-size:12px;color:#111;font-weight:400;">Referat møde 11.11.21</div>
<div class="t" style="left:690px;top:511.84px;font-size:12px;color:#111;font-weight:400;">03-03-2023 13:34</div>
<div class="t" style="left:815px;top:511.84px;font-size:12px;color:#111;font-weight:400;">Anne Christiansen</div>
<svg class="r" style="left:345px;top:538px" width="13" height="15" viewBox="0 0 13 15"><path d="M0.5 0.5 L8 0.5 L12 4.5 L12 14 L0.5 14 Z" fill="none" stroke="#777" stroke-width="1"/><path d="M8 0.5 L8 4.5 L12 4.5" fill="none" stroke="#777" stroke-width="1"/></svg>
<svg class="r" style="left:370px;top:538px" width="9" height="16" viewBox="0 0 9 16"><path d="M1 4 L1 12 Q1 15 4 15 Q7 15 7 12 L7 3 Q7 0.6 4.5 0.6 Q2.5 0.6 2.5 3 L2.5 11.5 Q2.5 12.8 3.8 12.8 Q5 12.8 5 11.5 L5 4.5" fill="none" stroke="#808080" stroke-width="1"/></svg>
<div class="t" style="left:435.5px;top:539.84px;font-size:12px;color:#111;font-weight:400;">Referat møde 13.05.22</div>
<div class="t" style="left:690px;top:539.84px;font-size:12px;color:#111;font-weight:400;">13-01-2023 11:44</div>
<div class="t" style="left:815px;top:539.84px;font-size:12px;color:#111;font-weight:400;">Anne Christiansen</div>
<svg class="r" style="left:345px;top:566px" width="13" height="15" viewBox="0 0 13 15"><path d="M0.5 0.5 L8 0.5 L12 4.5 L12 14 L0.5 14 Z" fill="none" stroke="#777" stroke-width="1"/><path d="M8 0.5 L8 4.5 L12 4.5" fill="none" stroke="#777" stroke-width="1"/></svg>
<svg class="r" style="left:370px;top:566px" width="9" height="16" viewBox="0 0 9 16"><path d="M1 4 L1 12 Q1 15 4 15 Q7 15 7 12 L7 3 Q7 0.6 4.5 0.6 Q2.5 0.6 2.5 3 L2.5 11.5 Q2.5 12.8 3.8 12.8 Q5 12.8 5 11.5 L5 4.5" fill="none" stroke="#808080" stroke-width="1"/></svg>
<div class="t" style="left:435.5px;top:567.84px;font-size:12px;color:#111;font-weight:400;">Referat møde 20.02.22</div>
<div class="t" style="left:690px;top:567.84px;font-size:12px;color:#111;font-weight:400;">13-01-2023 11:43</div>
<div class="t" style="left:815px;top:567.84px;font-size:12px;color:#111;font-weight:400;">Anne Christiansen</div>
<div class="r" style="left:341px;top:587px;width:585px;height:28px;background:#a9cdf0"></div>
<svg class="r" style="left:345px;top:594px" width="13" height="15" viewBox="0 0 13 15"><path d="M0.5 0.5 L8 0.5 L12 4.5 L12 14 L0.5 14 Z" fill="none" stroke="#777" stroke-width="1"/><path d="M8 0.5 L8 4.5 L12 4.5" fill="none" stroke="#777" stroke-width="1"/></svg>
<svg class="r" style="left:370px;top:594px" width="9" height="16" viewBox="0 0 9 16"><path d="M1 4 L1 12 Q1 15 4 15 Q7 15 7 12 L7 3 Q7 0.6 4.5 0.6 Q2.5 0.6 2.5 3 L2.5 11.5 Q2.5 12.8 3.8 12.8 Q5 12.8 5 11.5 L5 4.5" fill="none" stroke="#808080" stroke-width="1"/></svg>
<div class="t" style="left:435.5px;top:595.84px;font-size:12px;color:#111;font-weight:400;">Udviklingsprojekter 2021</div>
<div class="t" style="left:690px;top:595.84px;font-size:12px;color:#111;font-weight:400;">13-01-2023 09:50</div>
<div class="t" style="left:815px;top:595.84px;font-size:12px;color:#111;font-weight:400;">Anne Christiansen</div>
<svg class="r" style="left:345px;top:622px" width="13" height="15" viewBox="0 0 13 15"><path d="M0.5 0.5 L8 0.5 L12 4.5 L12 14 L0.5 14 Z" fill="none" stroke="#777" stroke-width="1"/><path d="M8 0.5 L8 4.5 L12 4.5" fill="none" stroke="#777" stroke-width="1"/></svg>
<svg class="r" style="left:370px;top:622px" width="9" height="16" viewBox="0 0 9 16"><path d="M1 4 L1 12 Q1 15 4 15 Q7 15 7 12 L7 3 Q7 0.6 4.5 0.6 Q2.5 0.6 2.5 3 L2.5 11.5 Q2.5 12.8 3.8 12.8 Q5 12.8 5 11.5 L5 4.5" fill="none" stroke="#808080" stroke-width="1"/></svg>
<div class="t" style="left:435.5px;top:623.84px;font-size:12px;color:#111;font-weight:400;">Udviklingsprojekter 2022</div>
<div class="t" style="left:690px;top:623.84px;font-size:12px;color:#111;font-weight:400;">13-01-2023 09:50</div>
<div class="t" style="left:815px;top:623.84px;font-size:12px;color:#111;font-weight:400;">Anne Christiansen</div>
<svg class="r" style="left:929px;top:423px" width="10" height="7" viewBox="0 0 10 7"><path d="M0.5 6.5 L4.75 1 L9 6.5 Z" fill="#8a8a8a"/></svg>
<div class="r" style="left:930px;top:435px;width:8px;height:169px;background:#8a8a8a;border-radius:4px"></div>
<svg class="r" style="left:929px;top:633px" width="10" height="7" viewBox="0 0 10 7"><path d="M0.5 0.5 L4.75 6 L9 0.5 Z" fill="#8a8a8a"/></svg>
<svg class="r" style="left:344px;top:648px" width="7" height="9" viewBox="0 0 7 9"><path d="M6 0.5 L0.8 4.5 L6 8.5 Z" fill="#8a8a8a"/></svg>
<div class="r" style="left:356px;top:648px;width:547px;height:8px;background:#8a8a8a;border-radius:4px"></div>
<svg class="r" style="left:916px;top:648px" width="7" height="9" viewBox="0 0 7 9"><path d="M0.8 0.5 L6 4.5 L0.8 8.5 Z" fill="#8a8a8a"/></svg>
<div class="r" style="left:954px;top:385px;width:2px;height:282px;background:#e4e4e4"></div>
<div class="r" style="left:956px;top:385px;width:593px;height:36px;background:#f3f3f3"></div>
<div class="t" style="left:968px;top:394.80px;font-size:15px;color:#333;font-weight:700;">Akt</div>
<div class="r" style="left:968px;top:419px;width:25px;height:2px;background:#2b6cc4"></div>
<div class="t" style="left:1017.5px;top:394.80px;font-size:15px;color:#333;font-weight:400;">Parter</div>
<div class="t" style="left:968px;top:437.26px;font-size:18px;color:#7a7a7a;font-weight:300;transform:scaleX(0.913);transform-origin:0 0">Udviklingsprojekter 2021</div>
<div class="t" style="left:968px;top:465.77px;font-size:11.5px;color:#333;font-weight:400;">Anne Christiansen (Ledelsessekretær, Administration)</div>
<div class="r" style="left:956px;top:491px;width:593px;height:1px;background:#cfcfcf"></div>
<div class="r" style="left:956px;top:520px;width:593px;height:1px;background:#cfcfcf"></div>
<div class="r" style="left:956px;top:492px;width:107px;height:28px;background:#a9cdf0"></div>
<svg class="r" style="left:964px;top:499px" width="12" height="14" viewBox="0 0 12 14"><path d="M0.5 0.5 L7.5 0.5 L11.5 4.5 L11.5 13.5 L0.5 13.5 Z" fill="none" stroke="#777" stroke-width="1"/><path d="M7.5 0.5 L7.5 4.5 L11.5 4.5" fill="none" stroke="#777" stroke-width="1"/></svg>
<div class="t" style="left:984px;top:500.84px;font-size:12px;color:#111;font-weight:400;">Aktdokument</div>
<svg class="r" style="left:1069px;top:498px" width="16" height="16" viewBox="0 0 16 16"><path d="M4.5 0.5 L12 0.5 L15.5 4 L15.5 15.5 L4.5 15.5 Z" fill="#fff" stroke="#777" stroke-width="1"/><rect x="0" y="3" width="9.5" height="9.5" fill="#c8442a"/><text x="2" y="11" font-size="8" font-weight="bold" font-family="Liberation Sans" fill="#fff">P</text><path d="M11 6 A3 3 0 1 0 14 9 L11 9 Z" fill="#d45a3a"/></svg>
<div class="t" style="left:1091.5px;top:500.84px;font-size:12px;color:#111;font-weight:400;">Udviklingsprojekter 2021.pptx</div>
<div class="t" style="left:964px;top:532.46px;font-size:16px;color:#000;font-weight:700;text-decoration:underline">Se vedhæftede slides</div>
<div class="r" style="left:1162px;top:269px;width:385px;height:386px;border:3px solid #ff0000;background:#fff"></div>
<div class="r" style="left:1165px;top:272px;width:379px;height:18px;background:#f3f3f3"></div>
<div class="r" style="left:1165px;top:290px;width:379px;height:1px;background:#2b6cc4"></div>
<div class="t" style="left:1170px;top:274.84px;font-size:12px;color:#111;font-weight:400;">Høring hos IT-udvalg (IT-udvalget)</div>
<svg class="r" style="left:1529px;top:277px" width="12" height="8" viewBox="0 0 12 8"><path d="M0 0.5 L11 0.5 L5.5 7.5 Z" fill="#2b6cc4"/></svg>
<div class="r" style="left:1167px;top:294px;width:360px;height:24px;border:1px solid #a9cdf0;background:#e8f1fb"></div>
<div class="t" style="left:1173.5px;top:328.84px;font-size:12px;color:#222;font-weight:400;">1. behandling (Første behandling)</div>
<div class="t" style="left:1173.5px;top:356.84px;font-size:12px;color:#222;font-weight:400;">1. prioriteter &nbsp;&nbsp;(Sager der skal færdiggøres før alt andet)</div>
<div class="t" style="left:1173.5px;top:384.84px;font-size:12px;color:#222;font-weight:400;">2. behandling (Anden behandling)</div>
<div class="t" style="left:1173.5px;top:412.84px;font-size:12px;color:#222;font-weight:400;">3. behandling (Tredje behandling)</div>
<div class="t" style="left:1173.5px;top:440.84px;font-size:12px;color:#222;font-weight:400;">Afventer oplys sag</div>
<div class="t" style="left:1173.5px;top:468.84px;font-size:12px;color:#222;font-weight:400;">Afventer review</div>
<div class="t" style="left:1173.5px;top:496.84px;font-size:12px;color:#222;font-weight:400;">Afventer sagsbehandling</div>
<div class="t" style="left:1173.5px;top:524.84px;font-size:12px;color:#222;font-weight:400;">Høring hos Finansudvalg (Finansudvalget)</div>
<div class="r" style="left:1167px;top:546px;width:360px;height:24px;background:#a9cdf0"></div>
<div class="t" style="left:1173.5px;top:552.84px;font-size:12px;color:#222;font-weight:400;">Høring hos IT-udvalg (IT-udvalget)</div>
<div class="t" style="left:1173.5px;top:580.84px;font-size:12px;color:#222;font-weight:400;">Høring hos Politisk (Det politiske udvalg)</div>
<div class="t" style="left:1173.5px;top:608.84px;font-size:12px;color:#222;font-weight:400;">Høring hos Økonomiudvalg (Økonomiudvalget)</div>
<div class="t" style="left:1173.5px;top:636.84px;font-size:12px;color:#222;font-weight:400;">Klar til offentliggørelse</div>
<div class="r" style="left:1529px;top:292px;width:15px;height:359px;background:#f0f0f0;border-left:1px solid #a0a0a0"></div>
<div class="r" style="left:1530px;top:292px;width:14px;height:16px;background:#fff;border-bottom:2px solid #a0a0a0"></div>
<svg class="r" style="left:1531px;top:296px" width="11" height="7" viewBox="0 0 11 7"><path d="M0.5 6.5 L5.5 0.5 L10.5 6.5 Z" fill="#333"/></svg>
<div class="r" style="left:1530px;top:308px;width:14px;height:261px;background:#fff;border-bottom:1px solid #a0a0a0"></div>
<div class="r" style="left:1530px;top:634px;width:14px;height:17px;background:#fff;border-top:1px solid #a0a0a0"></div>
<svg class="r" style="left:1531px;top:639px" width="11" height="7" viewBox="0 0 11 7"><path d="M0.5 0.5 L10.5 0.5 L5.5 6.5 Z" fill="#333"/></svg>
<div class="r" style="left:0px;top:0px;width:1px;height:687px;background:#1d56ab"></div>
<div class="r" style="left:1550px;top:0px;width:1px;height:687px;background:#1d56ab"></div>
<div class="r" style="left:0px;top:667px;width:1551px;height:20px;background:#2167c9"></div>
<div class="t" style="left:8.3px;top:671.84px;font-size:12px;color:#fff;font-weight:400;">8 resultater - opdateret i dag 15:03 (0 minutter siden)</div>
<div class="t" style="right:58.5px;top:671.84px;font-size:12px;color:#fff;font-weight:400;">Sag: 2023 - 4</div>
<svg class="r" style="left:1496px;top:668px" width="15" height="17" viewBox="0 0 15 17"><rect x="5" y="1" width="5" height="1.8" rx="0.6" fill="#fff"/><path d="M7.4 2.5 v1.5" stroke="#fff" stroke-width="1.3"/><circle cx="7.4" cy="9.8" r="5.8" fill="none" stroke="#fff" stroke-width="1.4"/><path d="M7.4 6 L8.4 9.5 A1.1 1.1 0 1 1 6.4 9.5 Z" fill="#fff"/><path d="M11.5 4.8 L12.8 3.5" stroke="#fff" stroke-width="1.3"/></svg>
<svg class="r" style="left:1513px;top:670px" width="14" height="14" viewBox="0 0 14 14"><path d="M1.2 1.3 L6.7 1.3 L12.8 8 L7.9 12.5 L1.2 6.6 Z" fill="none" stroke="#fff" stroke-width="1.3" stroke-linejoin="round"/><path d="M1.5 1.6 L4.5 1.6 L1.5 4.6 Z" fill="#fff"/></svg>
<div class="r" style="left:1533px;top:671px;width:4px;height:12px;background:#fff;border-radius:1px"></div>
<div class="r" style="left:1539px;top:671px;width:4px;height:12px;background:#fff;border-radius:1px"></div>
<div class="r" style="left:0px;top:686px;width:1551px;height:1px;background:#1d56ab"></div>
</body></html>
